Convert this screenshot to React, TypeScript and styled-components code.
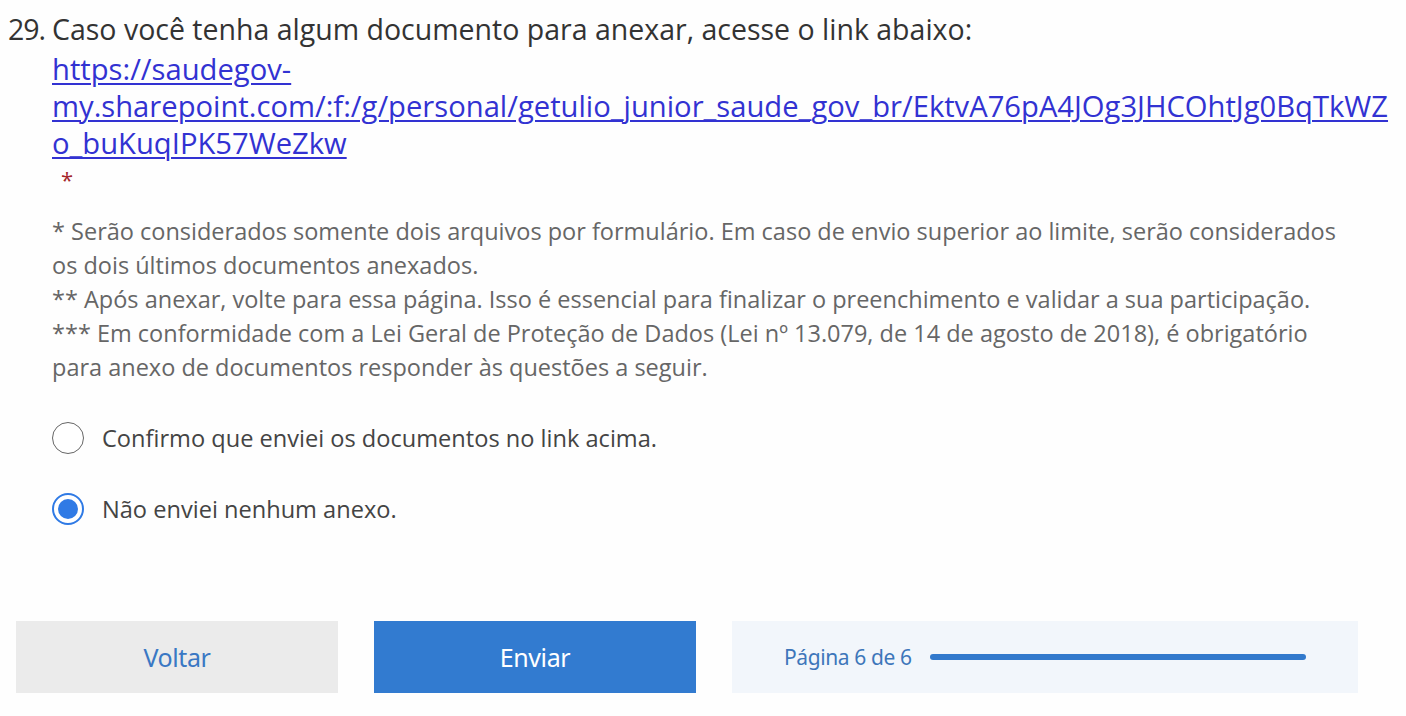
import React from 'react';
import styled, { createGlobalStyle } from 'styled-components';

const GlobalStyle = createGlobalStyle`
    html, body {
        margin: 0;
        padding: 0;
        background: #fefefe;
    }
    body {
        font-family: 'Open Sans', 'Noto Sans', sans-serif;
    }
`;

const Page = styled.div`
    width: 1406px;
    height: 716px;
    box-sizing: border-box;
    padding: 12px 0 0 8px;
    display: flex;
    flex-direction: column;
`;

const QuestionTitle = styled.div`
    display: flex;
    font-size: 28.5px;
    line-height: 34px;
    color: #333;
`;

const Number = styled.span`
    width: 44px;
    flex-shrink: 0;
    letter-spacing: -1px;
`;

const Body = styled.div`
    padding-left: 44px;
    display: flex;
    flex-direction: column;
`;

const DocLink = styled.a`
    margin-top: 5px;
    font-size: 29.2px;
    line-height: 37px;
    color: #3232d2;
    text-decoration: underline;
    text-decoration-thickness: 1.5px;
    text-underline-offset: 3px;
    white-space: nowrap;
`;

const Required = styled.span`
    color: #a4262c;
    font-size: 22px;
    line-height: 34px;
    padding-left: 9px;
`;

const Notes = styled.div`
    margin-top: 18px;
    font-size: 23.5px;
    line-height: 34px;
    color: #666;
    white-space: nowrap;
`;

const Options = styled.div`
    margin-top: 38px;
    display: flex;
    flex-direction: column;
    gap: 39px;
`;

const Option = styled.label`
    display: flex;
    align-items: center;
    gap: 18px;
    font-size: 23.6px;
    color: #444;
    cursor: pointer;
`;

const Radio = styled.span<{ checked?: boolean }>`
    width: 32px;
    height: 32px;
    flex-shrink: 0;
    box-sizing: border-box;
    border-radius: 50%;
    border: ${p => (p.checked ? '2px solid #2f7ae5' : '1.5px solid #666')};
    background: #fff;
    display: flex;
    align-items: center;
    justify-content: center;
    &::after {
        content: '';
        display: ${p => (p.checked ? 'block' : 'none')};
        width: 20px;
        height: 20px;
        border-radius: 50%;
        background: #2f7ae5;
    }
`;

const Footer = styled.div`
    margin-top: auto;
    margin-bottom: 23px;
    margin-left: 8px;
    display: flex;
    gap: 36px;
    height: 72px;
`;

const Button = styled.button<{ primary?: boolean }>`
    width: 322px;
    border: none;
    font-family: 'Noto Sans', 'Open Sans', sans-serif;
    font-size: 25px;
    letter-spacing: -0.4px;
    background: ${p => (p.primary ? '#327bd0' : '#ebebeb')};
    color: ${p => (p.primary ? '#fff' : '#3a78c4')};
    cursor: pointer;
`;

const Progress = styled.div`
    width: 626px;
    background: #f2f6fb;
    display: flex;
    align-items: center;
    gap: 18px;
    padding-left: 52px;
    box-sizing: border-box;
`;

const ProgressText = styled.span`
    font-family: 'Noto Sans', 'Open Sans', sans-serif;
    font-size: 21px;
    color: #3e76ba;
    letter-spacing: -0.4px;
`;

const Track = styled.div`
    width: 376px;
    height: 6px;
    border-radius: 3px;
    background: #3279cc;
`;

const App: React.FC = () => {
    return (
        <>
            <GlobalStyle />
            <Page>
                <QuestionTitle>
                    <Number>29.</Number>
                    <span>Caso você tenha algum documento para anexar, acesse o link abaixo:</span>
                </QuestionTitle>
                <Body>
                    <DocLink href="#">
                        https://saudegov-
                        <br />
                        my.sharepoint.com/:f:/g/personal/getulio_junior_saude_gov_br/EktvA76pA4JOg3JHCOhtJg0BqTkWZ
                        <br />
                        o_buKuqIPK57WeZkw
                    </DocLink>
                    <Required>*</Required>
                    <Notes>
                        * Serão considerados somente dois arquivos por formulário. Em caso de envio superior ao limite, serão considerados
                        <br />
                        os dois últimos documentos anexados.
                        <br />
                        ** Após anexar, volte para essa página. Isso é essencial para finalizar o preenchimento e validar a sua participação.
                        <br />
                        *** Em conformidade com a Lei Geral de Proteção de Dados (Lei nº 13.079, de 14 de agosto de 2018), é obrigatório
                        <br />
                        para anexo de documentos responder às questões a seguir.
                    </Notes>
                    <Options>
                        <Option>
                            <Radio />
                            Confirmo que enviei os documentos no link acima.
                        </Option>
                        <Option>
                            <Radio checked />
                            Não enviei nenhum anexo.
                        </Option>
                    </Options>
                </Body>
                <Footer>
                    <Button>Voltar</Button>
                    <Button primary>Enviar</Button>
                    <Progress>
                        <ProgressText>Página 6 de 6</ProgressText>
                        <Track />
                    </Progress>
                </Footer>
            </Page>
        </>
    );
};

export default App;
